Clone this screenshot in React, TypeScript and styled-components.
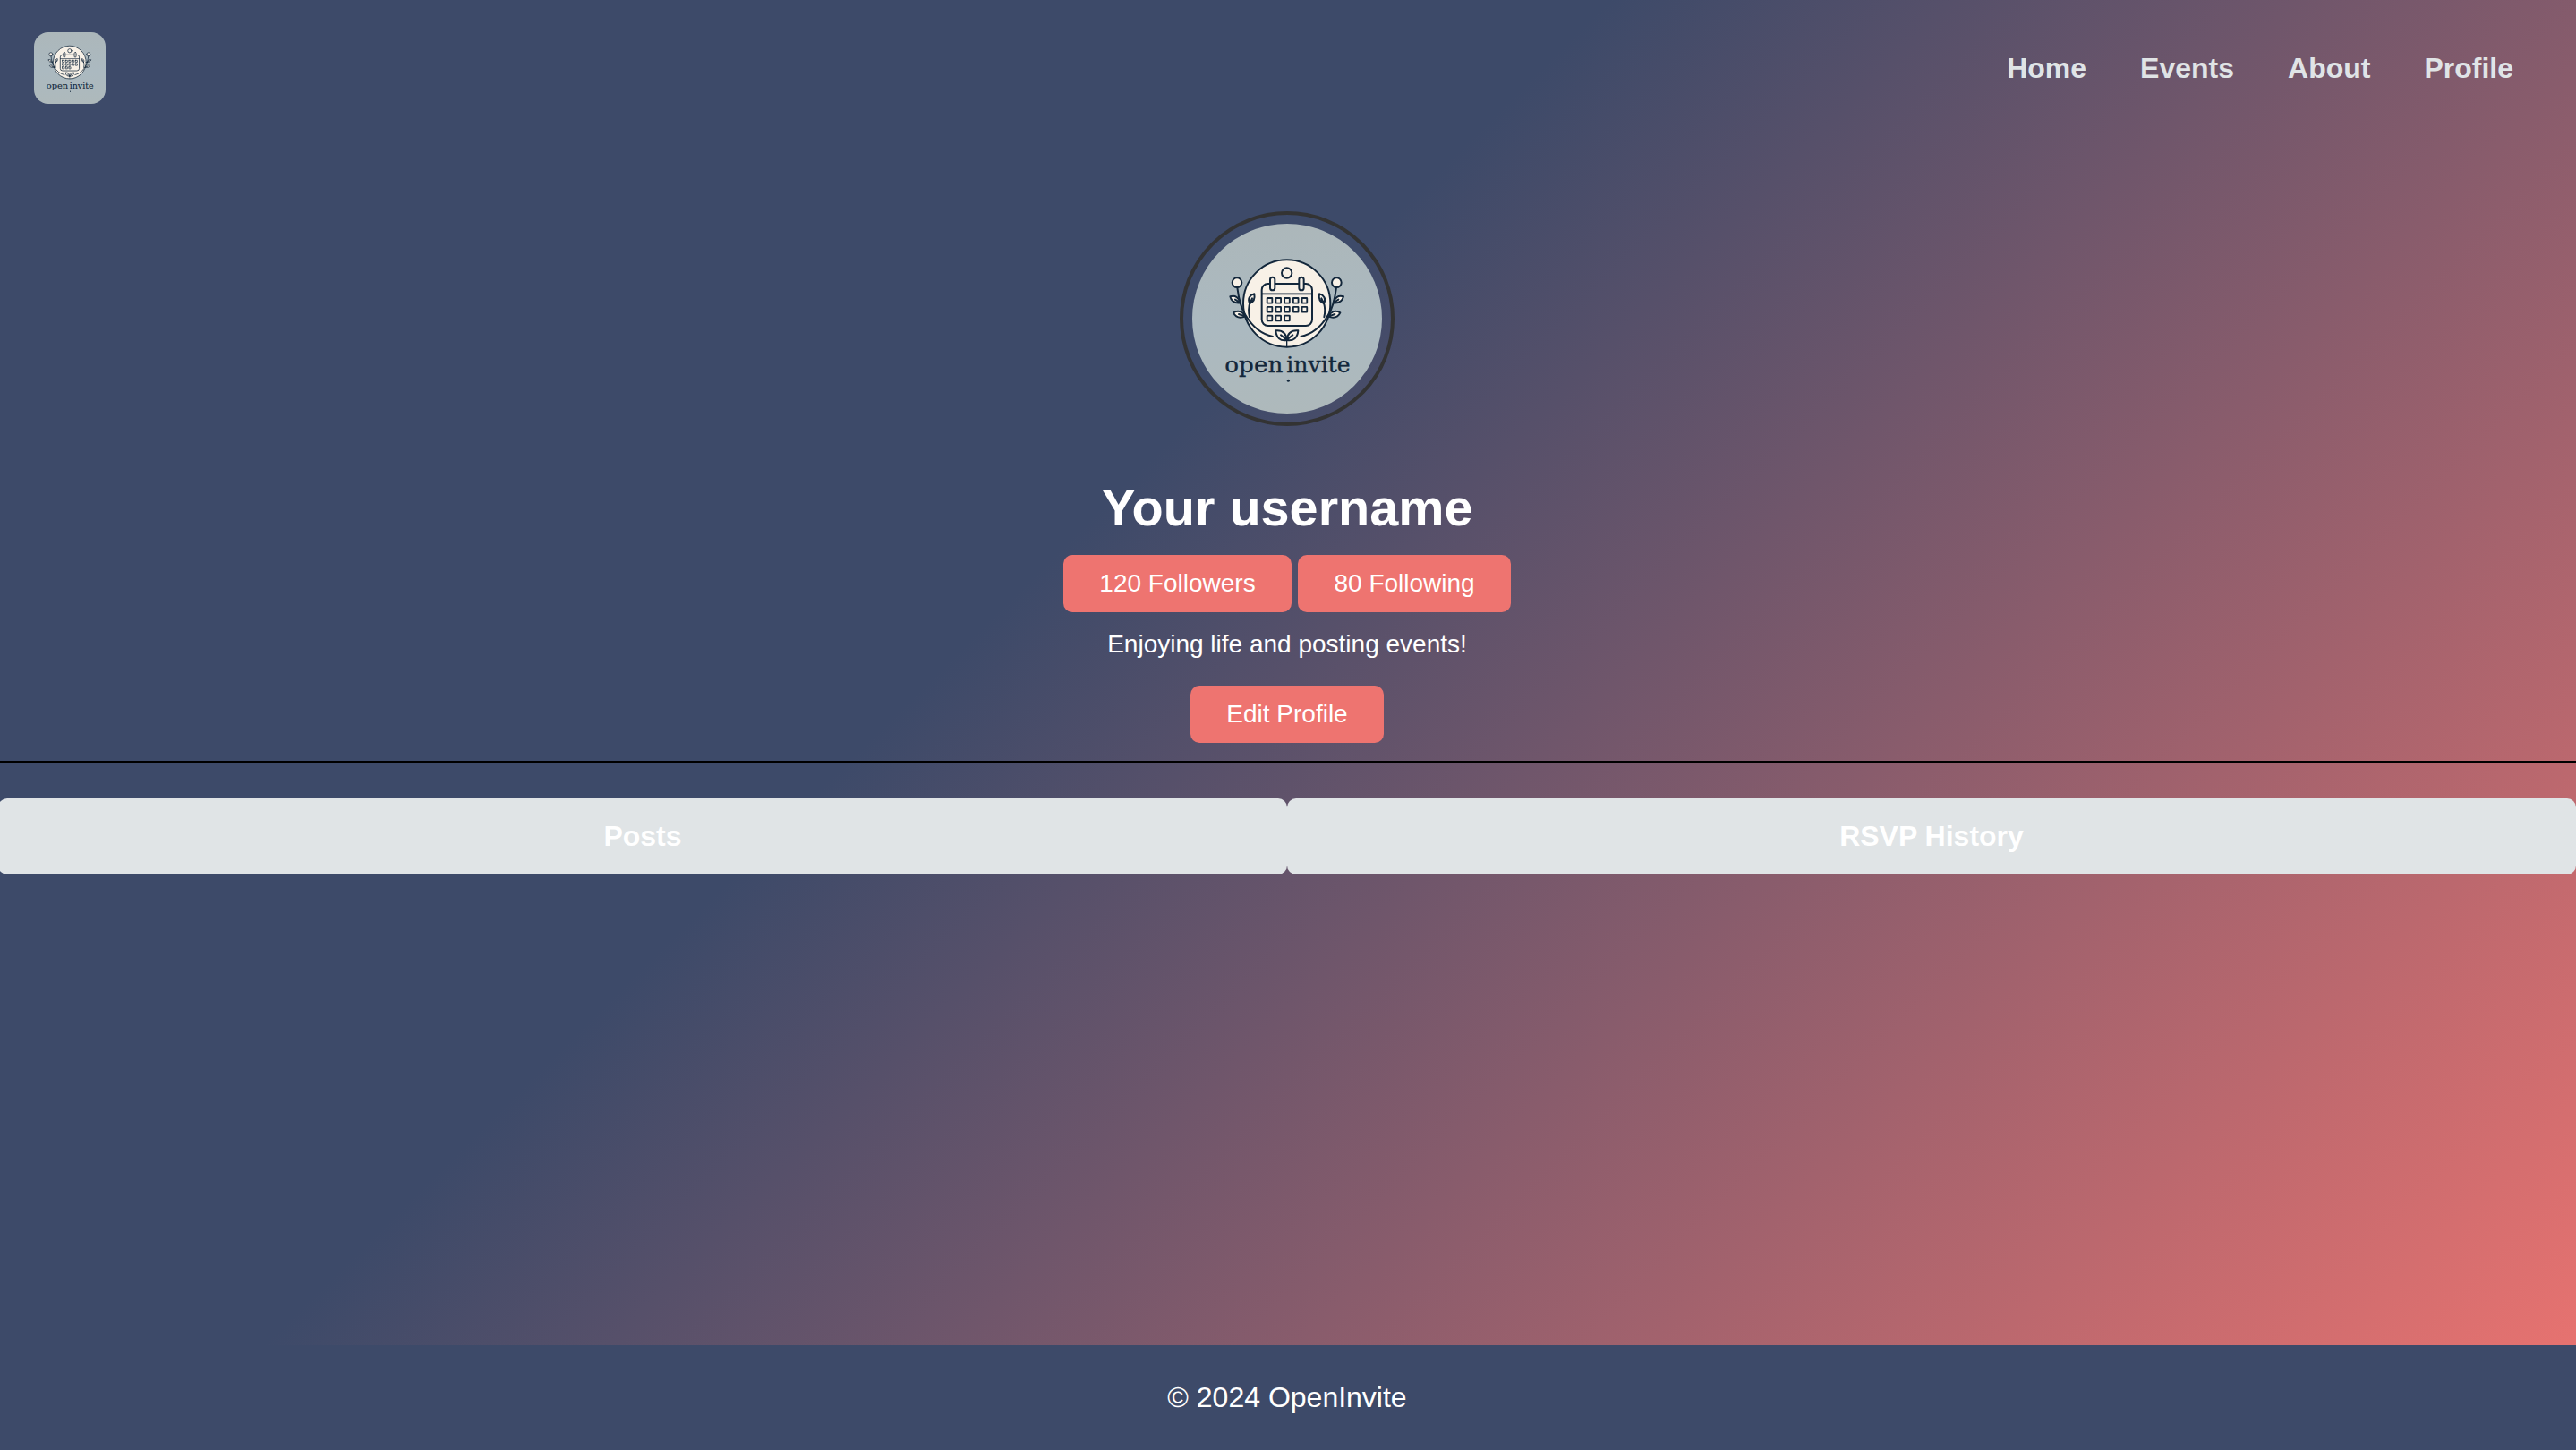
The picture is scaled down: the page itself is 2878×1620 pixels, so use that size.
import React from "react";
import styled, { createGlobalStyle } from "styled-components";

const navy = "#3d4a69";
const coral = "#ee7470";
const mist = "#e0e4e6";
const ink = "#13273b";
const cream = "#f8f1e7";

const GlobalStyle = createGlobalStyle`
  * { box-sizing: border-box; }
  html, body { margin: 0; padding: 0; overflow: hidden; background: ${navy}; }
  body { font-family: "Liberation Sans", Arial, sans-serif; color: #fff; }
`;

const Page = styled.div`
  display: flex;
  flex-direction: column;
  width: 2880px;
  height: 1620px;
  margin-left: -2px;
  background: linear-gradient(135deg, ${navy} 40%, ${coral} 100%);
`;

const Header = styled.header`
  display: flex;
  align-items: center;
  justify-content: space-between;
  padding: 36px 40px;
`;

const LogoBox = styled.a`
  display: block;
  width: 80px;
  height: 80px;
  border-radius: 16px;
  overflow: hidden;
`;

const Nav = styled.nav`
  display: flex;
  gap: 60px;
  padding-right: 30px;
`;

const NavLink = styled.a`
  font-size: 32px;
  line-height: 37px;
  font-weight: 700;
  color: ${mist};
`;

const Profile = styled.section`
  display: flex;
  flex-direction: column;
  align-items: center;
  padding: 84px 0 20px;
  border-bottom: 2px solid #000;
`;

const Avatar = styled.div`
  width: 240px;
  height: 240px;
  padding: 10px;
  border: 4px solid #333;
  border-radius: 50%;
`;

const AvatarImage = styled.div`
  width: 100%;
  height: 100%;
  border-radius: 50%;
  overflow: hidden;
`;

const Username = styled.h1`
  margin: 58px 0 0;
  font-size: 57.6px;
  line-height: 66px;
  font-weight: 700;
`;

const Stats = styled.div`
  display: flex;
  gap: 7.8px;
  margin-top: 20px;
`;

const Button = styled.button`
  height: 64px;
  padding: 0 40px;
  border: 0;
  border-radius: 10px;
  background: ${coral};
  color: #fff;
  font-family: inherit;
  font-size: 28px;
  line-height: 32px;
`;

const Bio = styled.p`
  margin: 20px 0 30px;
  font-size: 28px;
  line-height: 32px;
`;

const Tabs = styled.div`
  display: grid;
  grid-template-columns: 1fr 1fr;
  margin-top: 40px;
`;

const Tab = styled.div`
  padding: 24px;
  border-radius: 10px;
  background: ${mist};
  font-size: 32px;
  line-height: 37px;
  font-weight: 700;
  text-align: center;
`;

const Footer = styled.footer`
  margin-top: auto;
  padding: 40px;
  background: ${navy};
  font-size: 32px;
  line-height: 37px;
  text-align: center;
`;

const LogoSvg = styled.svg`
  display: block;
  width: 100%;
  height: 100%;
  background: linear-gradient(180deg, #acb7ba, #abb9c0 55%, #aeb9bb);
`;

const Wordmark = styled.text`
  font-family: "DejaVu Serif", serif;
  font-size: 75px;
  fill: ${ink};
  stroke: ${ink};
  stroke-width: 1px;
`;

const dayCells = [5, 5, 3].flatMap((count, row) =>
  Array.from({ length: count }, (_, col) => ({ x: 347 + col * 29.2, y: 339 + row * 29.5 }))
);

const Branch = ({ mirrored }: { mirrored?: boolean }) => (
  <g transform={mirrored ? "translate(826 0) scale(-1 1)" : undefined}>
    <circle cx="246" cy="287" r="16" fill={cream} />
    <path d="M247 304C251 335 258 372 275 397C297 434 327 460 366 468" fill="none" />
    <path d="M288 403C284 386 284 370 290 352" fill="none" />
    <path d="M289 357C280 341 289 329 304 325C307 341 303 351 289 357ZM289 357L297 340" fill={cream} />
    <path d="M257 355C239 357 227 350 223 334C241 329 253 338 257 355ZM257 355L240 344" fill={cream} />
    <path d="M274 401C256 407 241 403 234 388C250 378 265 384 274 401ZM274 401L252 393" fill={cream} />
  </g>
);

const Logo = () => (
  <LogoSvg viewBox="96 90 636 636" role="img" aria-label="openinvite">
    <g stroke={ink} strokeWidth="6" strokeLinecap="round" strokeLinejoin="round">
      <circle cx="413" cy="357" r="146" fill={cream} />
      <circle cx="413" cy="255" r="17" fill={cream} />
      <rect x="329" y="291" width="169" height="141" rx="21" fill={cream} />
      <path d="M330 325H497" strokeWidth="5" />
      <rect x="357" y="269" width="16" height="44" rx="8" fill={cream} />
      <rect x="454" y="269" width="16" height="44" rx="8" fill={cream} />
      {dayCells.map((cell) => (
        <rect key={`${cell.x}-${cell.y}`} x={cell.x} y={cell.y} width="17" height="17" rx="1" strokeWidth="5.5" fill="none" />
      ))}
      <Branch />
      <Branch mirrored />
      <path d="M413 500V480" fill="none" strokeWidth="4" />
      <path d="M413 480C391 484 378 472 376 448C399 446 411 458 413 480ZM411 478L393 463" fill={cream} />
      <path d="M413 480C435 484 449 472 451 448C428 446 415 458 413 480ZM415 478L433 463" fill={cream} />
    </g>
    <Wordmark x="205" y="587" textLength="195" lengthAdjust="spacingAndGlyphs">open</Wordmark>
    <Wordmark x="412" y="587" textLength="214" lengthAdjust="spacingAndGlyphs">invite</Wordmark>
    <circle cx="418" cy="616" r="4.5" fill={ink} />
  </LogoSvg>
);

export default function App() {
  return (
    <>
      <GlobalStyle />
      <Page>
        <Header>
          <LogoBox>
            <Logo />
          </LogoBox>
          <Nav>
            {["Home", "Events", "About", "Profile"].map((label) => (
              <NavLink key={label}>{label}</NavLink>
            ))}
          </Nav>
        </Header>
        <Profile>
          <Avatar>
            <AvatarImage>
              <Logo />
            </AvatarImage>
          </Avatar>
          <Username>Your username</Username>
          <Stats>
            <Button>120 Followers</Button>
            <Button>80 Following</Button>
          </Stats>
          <Bio>Enjoying life and posting events!</Bio>
          <Button>Edit Profile</Button>
        </Profile>
        <Tabs>
          <Tab>Posts</Tab>
          <Tab>RSVP History</Tab>
        </Tabs>
        <Footer>© 2024 OpenInvite</Footer>
      </Page>
    </>
  );
}
